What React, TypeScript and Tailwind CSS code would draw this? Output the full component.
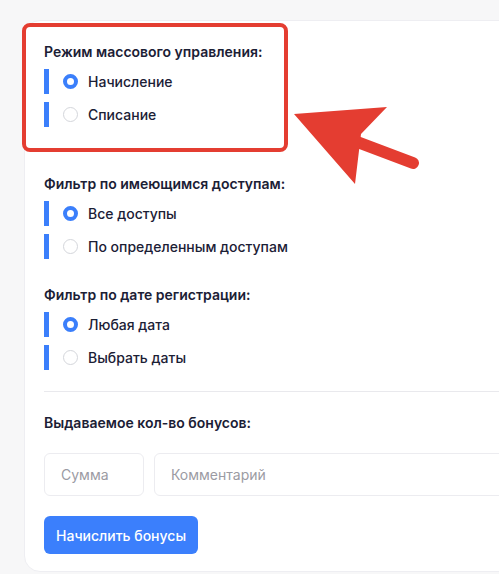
import React from "react";

type Option = { label: string; checked?: boolean };

const sections: { title: string; options: Option[] }[] = [
  {
    title: "Режим массового управления:",
    options: [{ label: "Начисление", checked: true }, { label: "Списание" }],
  },
  {
    title: "Фильтр по имеющимся доступам:",
    options: [{ label: "Все доступы", checked: true }, { label: "По определенным доступам" }],
  },
  {
    title: "Фильтр по дате регистрации:",
    options: [{ label: "Любая дата", checked: true }, { label: "Выбрать даты" }],
  },
];

function Radio({ checked }: { checked?: boolean }) {
  if (checked) {
    return <span className="w-[15px] h-[15px] rounded-full border-[4px] border-[#3b7ffb] bg-white shrink-0" />;
  }
  return <span className="w-[15px] h-[15px] rounded-full border border-[#d4d6db] bg-white shrink-0" />;
}

function RadioRow({ option }: { option: Option }) {
  return (
    <label className="flex items-center h-[25px]">
      <span className="w-[5px] h-full bg-[#3b7ffb]" />
      <span className="ml-[14px] flex items-center">
        <Radio checked={option.checked} />
      </span>
      <span className="ml-[10px] text-[14px] font-medium text-[#1b2035]">{option.label}</span>
    </label>
  );
}

function Section({ title, options, className }: { title: string; options: Option[]; className?: string }) {
  return (
    <div className={className}>
      <div className="text-[14px] leading-[20px] font-semibold text-[#1b2035]">{title}</div>
      <div className="mt-[7px] flex flex-col gap-2">
        {options.map((o) => (
          <RadioRow key={o.label} option={o} />
        ))}
      </div>
    </div>
  );
}

export default function App() {
  return (
    <div
      className="relative w-[499px] h-[574px] overflow-hidden bg-[#f7f7f8]"
      style={{ fontFamily: "Inter, 'Noto Sans', sans-serif" }}
    >
      <div className="ml-[24px] mt-[20px] w-[520px] bg-white border border-[#eeeef2] rounded-[16px] pl-[19px] pt-[21px] pb-[17px]">
        <Section {...sections[0]} />
        <Section {...sections[1]} className="mt-[47px]" />
        <Section {...sections[2]} className="mt-[26px]" />

        <div className="mt-[21px] h-px bg-[#e9e9ed]" />

        <div className="mt-[21px] text-[14px] leading-[20px] font-semibold text-[#1b2035]">
          Выдаваемое кол-во бонусов:
        </div>

        <div className="mt-[20px] flex gap-[10px]">
          <input
            placeholder="Сумма"
            className="w-[100px] h-[43px] rounded-[6px] border border-[#ececf0] px-[16px] text-[14px] placeholder:text-[#9b9ba3] outline-none"
          />
          <input
            placeholder="Комментарий"
            className="flex-1 h-[43px] rounded-[6px] border border-[#ececf0] px-[16px] text-[14px] placeholder:text-[#9b9ba3] outline-none"
          />
        </div>

        <button className="mt-[20px] h-[38px] px-[12px] rounded-[6px] bg-[#3b7ffc] text-white text-[14px] font-medium">
          Начислить бонусы
        </button>
      </div>

      {/* annotation: highlight box + arrow */}
      <div className="absolute left-[22px] top-[23px] w-[266px] h-[129px] rounded-[8px] border-[4px] border-[#e43d31] pointer-events-none" />
      <svg className="absolute left-0 top-0 pointer-events-none" width="499" height="574" viewBox="0 0 499 574">
        <line x1="352" y1="140" x2="413" y2="163" stroke="#e43d31" strokeWidth="12" strokeLinecap="round" />
        <polygon points="294,114 387,107 361,134 355,184" fill="#e43d31" />
      </svg>
    </div>
  );
}
